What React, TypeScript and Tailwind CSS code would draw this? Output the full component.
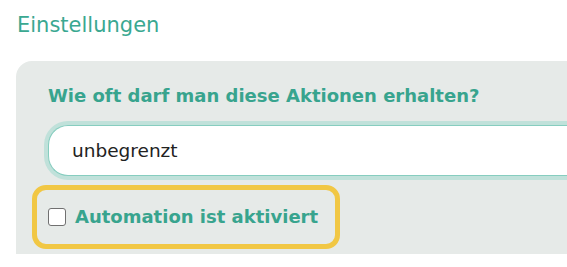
import { useState } from 'react';

export default function App() {
	const [active, setActive] = useState(false);

	return (
		<div className="h-[267px] w-full overflow-hidden bg-white font-['DejaVu_Sans',sans-serif]">
			<h2 className="pl-[17px] pt-[11px] text-[21px] leading-[28px] font-normal text-[#3aa891]">
				Einstellungen
			</h2>
			<div className="ml-4 mt-[22px] rounded-tl-[16px] bg-[#e6eae8] pb-[5px] pl-4 pt-[23px]">
				<div className="pl-4">
					<label className="block text-[18px] leading-[24px] font-bold text-[#38a48e]">
						Wie oft darf man diese Aktionen erhalten?
					</label>
					<div className="mt-[17px] rounded-l-[20px] border border-r-0 border-[#86cdbf] bg-white py-[12px] pl-[23px] text-[18.5px] leading-[25px] text-[#222] shadow-[0_0_0_4px_#c0e1da]">
						unbegrenzt
					</div>
				</div>
				<div className="mt-[9px] flex h-[64px] w-[308px] items-center gap-[9px] rounded-[14px] border-[5px] border-[#f1c744] px-[11px]">
					<input
						type="checkbox"
						checked={active}
						onChange={(e) => setActive(e.target.checked)}
						className="h-[18px] w-[18px] shrink-0 appearance-none rounded-[3px] border border-[#707070] bg-white"
					/>
					<span className="text-[18px] leading-[24px] font-bold text-[#38a48e]">Automation ist aktiviert</span>
				</div>
			</div>
		</div>
	);
}
